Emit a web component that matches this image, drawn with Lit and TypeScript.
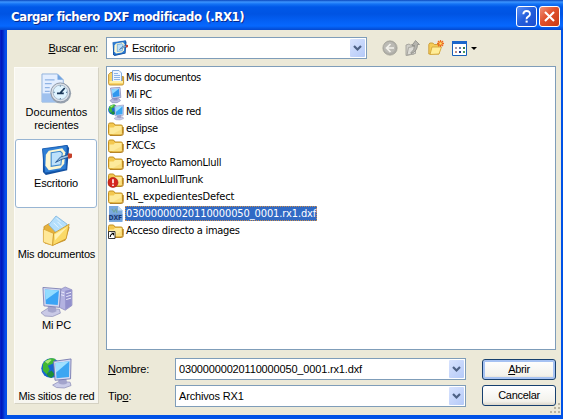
import { LitElement, html, css, svg, TemplateResult } from "lit";
import { customElement, property } from "lit/decorators.js";

const pcArt = svg`
  <path d="M19 4l6-3 7 3v16l-7 5-6-3z" fill="#b3b2e0" stroke="#8583b8" stroke-width=".7"/>
  <path d="M25 5l6.500-1.500v16.500L25 24.500z" fill="#9290cc"/>
  <path d="M20.500 6l3.500 1M20.500 9l3.500 1M26 8l5-1.500M26 11l5-1.500M26 14l5-1.500" stroke="#e9e9fb" stroke-width="1"/>
  <path d="M0 27.500l7-4.500 12 1 1 4-8 3.500-8-.5z" fill="#c9c9e6" stroke="#8788b3" stroke-width=".7"/>
  <path d="M7 21h8l1 5q-4 3-9 0z" fill="#a3a4cc"/>
  <path d="M2 1.500l18.500 1.500-1.500 19-16-1.500z" fill="#d3d7f0" stroke="#7a7db2" stroke-width=".9"/>
  <path d="M4 3.500l14.500 1.200-1.200 15-12.300-1.200z" fill="#3aa4f5"/>
  <path d="M4 3.500l14.500 1.200L4.800 14.500z" fill="#92dcff"/>`;

const netArt = svg`
  <circle cx="10.500" cy="11.500" r="10.200" fill="#1766cf"/>
  <path d="M2 7c3-5 9-7 13-5l-3 5-5 2 2 4-3 5-4-4z" fill="#40b735"/>
  <path d="M6 17l5-3 3 4-3 3.500c-3-.5-5-2-5-4.500z" fill="#1d8e38"/>
  <path d="M4 5c2-2 5-3 7-2L7 7z" fill="#a9ea74"/>
  <path d="M12 29l7-4 11 1 1 3.500-7 2.500-8-.5z" fill="#c9cbe8" stroke="#8486b2" stroke-width=".7"/>
  <path d="M18 22h8l1 5q-4 3-9 0z" fill="#a3a4cc"/>
  <path d="M13 4.500L31 2l-.5 20.500L14.500 24z" fill="#d6daf2" stroke="#7074ac" stroke-width=".9"/>
  <path d="M15 6.300L29.300 4.300l-.4 16.400L16 22z" fill="#3ca6f2"/>
  <path d="M15 6.300l14.300-2L15.600 16z" fill="#9fe0ff"/>`;

const deskArt = svg`
  <path d="M2 6L27 1l2 3-2 23-22 5-3-3z" fill="#124f9f"/>
  <path d="M1.500 5L27 1.500 26 26 4 30z" fill="#2f7fd6" stroke="#1558ad" stroke-width=".9"/>
  <path d="M8 7l14-2.500 3 4-1 12-4 4.500-12 2-3.500-4.500.5-11.500z" fill="#fdf7d2"/>
  <path d="M10.500 9l9.500-1.500 2 2-1.500 12-10 1.500z" fill="#bde1fb" stroke="#3b87cf" stroke-width="1.100"/>
  <path d="M15 19l5-5.500 8-2.500 1 2.500-8 2.500z" fill="#9cc4e6" stroke="#1c4f8c" stroke-width=".9"/>
  <path d="M28 9.500l4 .5v4l-3.500 1.500-1-3z" fill="#c5402a"/>`;

const folderArt = svg`
  <path d="M.5 3.500q0-1.500 1.500-1.500h3.500l1.500 2h6q1.500 0 1.500 1.500v7q0 1.500-1.500 1.500H2q-1.500 0-1.500-1.500z" fill="#f3c850" stroke="#c39022"/>
  <path d="M1.500 6.500h4l1.500-1.500h6.500v8h-12z" fill="#fdea9b"/>
  <path d="M4 13.500L14 8v4q0 1.500-1.500 1.500z" fill="#f7d877" opacity=".65"/>
  <path d="M2 14.500h11.500q1.800 0 1.800-2V6" fill="none" stroke="#b17d1c" stroke-width=".9"/>`;

const icons: Record<string, { box: string; art: TemplateResult | unknown }> = {
  recent: {
    box: "0 0 32 32",
    art: svg`
      <path d="M1 1h16l6 6v23H1z" fill="#e3eeff" stroke="#92b2dc"/>
      <path d="M1 21h22v9H1z" fill="#9fc1ee"/>
      <path d="M17 1v6h6z" fill="#72a4e0"/>
      <path d="M4 7h10M4 11h7M4 15h5M4 19h5" stroke="#8fb3e4" stroke-width="1.300"/>
      <circle cx="20.500" cy="20.800" r="10.600" fill="#98a2ae"/>
      <circle cx="20" cy="20" r="9.800" fill="#dbe0e7" stroke="#8f9aa9"/>
      <circle cx="20" cy="20" r="7.500" fill="#dff3ff" stroke="#a9bccd"/>
      <path d="M24.500 15.500L20 20.500M16.500 21h7" stroke="#1b3758" stroke-width="1.700"/>
      <path d="M20 13v1M20 26v1M13 20h1M26 20h1" stroke="#48698a" stroke-width="1.200"/>`,
  },
  desktop: { box: "0 0 32 32", art: deskArt },
  documents: {
    box: "0 0 32 32",
    art: svg`
      <path d="M3 12l5-3 4 2 14-1 3 3-4 13-13 5L4 29z" fill="#e6b23c" stroke="#bf8b25" stroke-width=".8"/>
      <path d="M15.500 1L27 9.500 19 22 8 10z" fill="#b3defb" stroke="#79b0dc" stroke-width=".8"/>
      <path d="M16 3l4 4M17 7l5 5M13 8l5 5" stroke="#e5f5ff" stroke-width="1"/>
      <path d="M2.500 14.500L13 19l-1 12.500-9.500-3.500z" fill="#ffe898" stroke="#d8a535" stroke-width=".8"/>
      <path d="M13 19l16-9.500-3 15L12 31.500z" fill="#fbda68" stroke="#c89324" stroke-width=".8"/>
      <path d="M14 20l13-7.500L14.500 26z" fill="#fff2b2"/>`,
  },
  pc: { box: "0 0 32 32", art: pcArt },
  network: { box: "0 0 32 32", art: netArt },
  monitor: {
    box: "0 0 16 16",
    art: svg`
      <path d="M2 13.500l3-1.800h6l1.500 2-3.500 2H4z" fill="#b9bce0" stroke="#8084b5" stroke-width=".6"/>
      <path d="M5.500 10.500h4v3h-4z" fill="#9093c5"/>
      <path d="M2.500 1l9.500-.6.800 10.100-8.800 1z" fill="#cdd4f0" stroke="#7a80b6" stroke-width=".7"/>
      <path d="M3.700 2.200l7.200-.5.700 7.600-6.700.9z" fill="#3097ee"/>
      <path d="M3.700 2.200l7.200-.5-6.600 5.300z" fill="#90d8ff"/>`,
  },
  docs: {
    box: "0 0 16 16",
    art: svg`
      <path d="M.6 4.500l2-2h2v8h10V6l1 1v6.500q0 1.500-1.500 1.500H2q-1.400 0-1.400-1.500z" fill="#f8d469" stroke="#bf8d27" stroke-width=".9"/>
      <path d="M4.500.5h6.500l2.500 2.500v8.500h-9z" fill="#eef6ff" stroke="#7ba4d9" stroke-width=".9"/>
      <path d="M6 3.500h4M6 5.500h6M6 7.500h6M6 9.500h6" stroke="#8eb5e6"/>
      <path d="M1.500 12h13.500" stroke="#ffefa5" stroke-width="2"/>`,
  },
  folder: { box: "0 0 16 16", art: folderArt },
  alert: {
    box: "0 0 16 16",
    art: svg`${folderArt}<circle cx="5" cy="10.500" r="5" fill="#d5261e" stroke="#9d1512" stroke-width=".6"/><path d="M5 7.300v4M5 12.500v1.500" stroke="#fff" stroke-width="1.600"/>`,
  },
  shortcut: {
    box: "0 0 16 16",
    art: svg`${folderArt}<path d="M.5 8.500h6.500v7H.5z" fill="#fff" stroke="#222" stroke-width=".9"/><path d="M2.200 14q0-2.500 2-3" fill="none" stroke="#000" stroke-width="1.100"/><path d="M3 9.700h3v3z"/>`,
  },
  dxf: {
    box: "0 0 16 16",
    art: svg`
      <path d="M1 0h9l4.500 4.500V16H1z" fill="#7aa9de"/>
      <path d="M10 0v4.500h4.500z" fill="#c3dcf6"/>
      <path d="M4 3l2 3 2-3 1 4" stroke="#6fa79c" fill="none" stroke-width="1.100"/>
      <path d="M1 8h13.500v6.500H1z" fill="#6c9bd6"/>
      <text x=".5" y="14" font-family="DejaVu Sans Condensed, sans-serif" font-size="6.800" font-weight="bold" fill="#1b3a73" textLength="13.500">DXF</text>`,
  },
  back: {
    box: "0 0 16 16",
    art: svg`
      <circle cx="8" cy="8" r="7.200" fill="#aeada7" stroke="#99988f" stroke-width=".6"/>
      <circle cx="7.500" cy="7.500" r="5.800" fill="#bbbab4"/>
      <path d="M8.500 4L4.500 8l4 4M5 8h7" fill="none" stroke="#f3f2ec" stroke-width="1.700"/>`,
  },
  up: {
    box: "0 0 16 16",
    art: svg`
      <path d="M1 5l3-1 1.500 1L9 4v10l-8 1.500z" fill="#cfcec8" stroke="#a1a09a" stroke-width=".9"/>
      <path d="M3.500 7.500l7-1.500v7.500L2 15z" fill="#dddcd7" stroke="#a1a09a" stroke-width=".9"/>
      <path d="M6 12.500q3.500-2 3.500-7H7L10.500.5 14.500 4.500h-2q0 7-6.500 9z" fill="#b5b4ae" stroke="#83827c" stroke-width=".7"/>`,
  },
  create: {
    box: "0 0 16 16",
    art: svg`
      <path d="M.8 4.500l1-1.500h3l1.500 1.500H11v9.500H.8z" fill="#f5cc57" stroke="#c99b34" stroke-width=".9"/>
      <path d="M2 14.500l2-7.500h9.500L11 14z" fill="#ffed98" stroke="#d4a73c" stroke-width=".9"/>
      <path d="M12.500 0v7M9 3.500h7M10 1l5 5M15 1l-5 5" stroke="#ee6c1c" stroke-width="1.300"/>
      <circle cx="12.500" cy="3.500" r="1.200" fill="#ffdf68"/>`,
  },
  views: {
    box: "0 0 16 15",
    art: svg`
      <path d="M.5.5h14v14H.5z" fill="#fff" stroke="#1760ba"/>
      <path d="M0 0h15v3H0z" fill="#1a66cb"/>
      <path d="M3 6h2v2H3z" fill="#a99aa8"/><path d="M7 6h2v2H7z" fill="#637dae"/><path d="M3 10h2v2H3z" fill="#c08c84"/>
      <path d="M11 6h2v2h-2z" fill="#357b49"/><path d="M7 10h2v2H7z" fill="#18358e"/><path d="M11 10h2v2h-2z" fill="#4b9b61"/>`,
  },
  help: {
    box: "0 0 21 21",
    art: svg`<path d="M7 8q0-3.500 3.700-3.500T14.300 8q0 1.500-2 2.700T10.600 13.500" fill="none" stroke="#fff" stroke-width="2.100"/><path d="M9.500 15h2.300v2.200H9.500z" fill="#fff"/>`,
  },
  close: {
    box: "0 0 21 21",
    art: svg`<path d="M5.500 5.500l10 10M15.500 5.500l-10 10" stroke="#fff" stroke-width="2.300"/>`,
  },
  chevron: {
    box: "0 0 9 6",
    art: svg`<path d="M1 1l3.500 3.500L8 1" fill="none" stroke="#4d6185" stroke-width="2.200"/>`,
  },
};

@customElement("xp-icon")
class XpIcon extends LitElement {
  @property() name = "folder";
  static styles = css`
    :host { display: block; flex: none; width: 16px; height: 16px; }
    svg { display: block; width: 100%; height: 100%; overflow: visible; }
  `;
  render() {
    const icon = icons[this.name];
    return html`<svg viewBox=${icon.box}>${icon.art}</svg>`;
  }
}

@customElement("xp-combo")
class XpCombo extends LitElement {
  static styles = css`
    :host { display: flex; box-sizing: border-box; height: 22px; border: 1px solid #7f9db9; background: #fff; padding: 1px; align-items: center; }
    .value { flex: 1; display: flex; align-items: center; gap: 4px; white-space: nowrap; }
    .drop { width: 15px; height: 18px; border-radius: 1px; background: linear-gradient(135deg, #d8e3fe, #b5caf8); display: flex; align-items: center; justify-content: center; }
    .mark { width: 9px; height: 6px; }
  `;
  render() {
    return html`<div class="value"><slot></slot></div><div class="drop"><xp-icon class="mark" name="chevron"></xp-icon></div>`;
  }
}

const places = [
  { icon: "recent", lines: ["Documentos", "recientes"] },
  { icon: "desktop", lines: ["Escritorio"], active: true },
  { icon: "documents", lines: ["Mis documentos"] },
  { icon: "pc", lines: ["Mi PC"] },
  { icon: "network", lines: ["Mis sitios de red"] },
];

const files = [
  { icon: "docs", name: "Mis documentos", fit: "tight" },
  { icon: "monitor", name: "Mi PC", fit: "normal" },
  { icon: "network", name: "Mis sitios de red", fit: "normal" },
  { icon: "folder", name: "eclipse", fit: "tight" },
  { icon: "folder", name: "FXCCs", fit: "normal" },
  { icon: "folder", name: "Proyecto RamonLlull", fit: "normal" },
  { icon: "alert", name: "RamonLlullTrunk", fit: "normal" },
  { icon: "folder", name: "RL_expedientesDefect", fit: "loose" },
  { icon: "dxf", name: "03000000020110000050_0001.rx1.dxf", fit: "loose", selected: true },
  { icon: "shortcut", name: "Acceso directo a images", fit: "normal" },
];

@customElement("app-root")
class AppRoot extends LitElement {
  static styles = css`
    * { box-sizing: border-box; }
    :host { display: flex; flex-direction: column; width: 563px; height: 419px; overflow: hidden; color: #000;
      font: 11px/13px "Liberation Sans", Arial, sans-serif; letter-spacing: -.16px;
      background: linear-gradient(90deg, #0831d9 0, #0013b8 1px, #0028c8 3px, #0a4bea 5px, #0052e6 7px); }
    .title { height: 30px; flex: none; display: flex; align-items: center; padding: 3px 3px 0 11px; gap: 2px;
      background: linear-gradient(180deg, #0a47bd 0, #3d95ff 2px, #1473f5 4px, #0058e8 7px, #0054e3 14px, #0460f5 21px, #0668ff 26px, #0558e6 28px, #0448cf 30px); }
    .caption { flex: 1; color: #fff; font: bold 13px/16px "DejaVu Sans Condensed", sans-serif; letter-spacing: -.4px; text-shadow: 1px 1px #0a2a8c; white-space: nowrap; }
    .tbtn { width: 21px; height: 21px; border: 1px solid #fff; border-radius: 3px; background: linear-gradient(135deg, #5c8ff4, #225ddb 50%, #1d4ed0); }
    .tbtn.close { background: linear-gradient(135deg, #f0917a, #e0502b 45%, #c83a14); }
    .tbtn xp-icon { width: 19px; height: 19px; }
    .body { height: 385px; flex: none; margin: 0 2px 0 7px; padding: 7px 5px 0 7px; background: #ece9d8; display: flex; flex-direction: column; gap: 7px; }
    .top { display: flex; align-items: center; height: 22px; }
    .look { width: 92px; padding-right: 8px; text-align: right; letter-spacing: -.3px; }
    .where { width: 261px; padding-left: 5px; letter-spacing: -.3px; }
    .tools { display: flex; align-items: center; gap: 7px; margin-left: 15px; }
    .views { display: flex; align-items: center; gap: 3px; margin-left: 1px; }
    .views xp-icon { height: 15px; }
    .arrow { border: 3px solid transparent; border-top-color: #000; border-bottom: 0; }
    .main { display: flex; gap: 7px; height: 341px; }
    .places { width: 85px; height: 337px; margin-top: 1px; background: #f7f6f0; border: 1px solid #fdfcf8; border-right-color: #d5d2c3; border-bottom-color: #d5d2c3; display: flex; flex-direction: column; }
    .place { height: 71px; flex: none; padding-top: 5px; display: flex; flex-direction: column; align-items: center; gap: 2px; text-align: center; white-space: nowrap; letter-spacing: -.2px; }
    .place:first-child { letter-spacing: 0; }
    .place.active { height: 69px; margin: 0 1px 2px 0; padding-top: 4px; background: #fff; border: 1px solid #98b5d3; border-radius: 3px; }
    .place xp-icon { width: 31px; height: 31px; }
    .right { width: 450px; display: flex; flex-direction: column; }
    .list { height: 284px; flex: none; border: 1px solid #7f9db9; background: #fff; padding: 2px 1px; }
    .file { height: 17px; display: flex; align-items: center; gap: 1px; font: 11px/15px "DejaVu Sans Condensed", sans-serif; }
    .name { padding: 0 1px; white-space: nowrap; }
    .normal { letter-spacing: -.3px; }
    .tight { letter-spacing: -.42px; }
    .loose { letter-spacing: -.11px; }
    .selected .name { background: #316ac5; color: #fff; outline: 1px dotted #c98e4e; outline-offset: -1px; }
    .form { display: grid; grid-template-columns: 69px 291px 90px; row-gap: 5px; margin-top: 8px; align-items: center; }
    .form xp-combo { padding-left: 3px; }
    .form .label { padding-left: 2px; }
    .btn { height: 21px; margin-left: 16px; width: 74px; border: 1px solid #17406f; border-radius: 3px; background: linear-gradient(#fff, #f3f2ec 80%, #dcd7cb); display: flex; align-items: center; justify-content: center; align-self: start; letter-spacing: -.3px; }
    .btn.default { align-self: end; box-shadow: inset 0 0 0 2px #a6c2f2; }
    .grip { position: absolute; left: 550px; top: 403px; width: 11px; height: 11px; }
    .grip svg { display: block; }
  `;

  render() {
    return html`
      <div class="title">
        <div class="caption">Cargar fichero DXF modificado (.RX1)</div>
        <div class="tbtn"><xp-icon name="help"></xp-icon></div>
        <div class="tbtn close"><xp-icon name="close"></xp-icon></div>
      </div>
      <div class="body">
        <div class="top">
          <div class="look"><u>B</u>uscar en:</div>
          <xp-combo class="where"><xp-icon name="desktop"></xp-icon><span>Escritorio</span></xp-combo>
          <div class="tools">
            <xp-icon name="back"></xp-icon>
            <xp-icon name="up"></xp-icon>
            <xp-icon name="create"></xp-icon>
            <div class="views"><xp-icon name="views"></xp-icon><div class="arrow"></div></div>
          </div>
        </div>
        <div class="main">
          <div class="places">
            ${places.map((p) => html`<div class="place ${p.active ? "active" : ""}">
              <xp-icon name=${p.icon}></xp-icon>
              <div>${p.lines.map((l) => html`<div>${l}</div>`)}</div>
            </div>`)}
          </div>
          <div class="right">
            <div class="list">
              ${files.map((f) => html`<div class="file ${f.selected ? "selected" : ""}">
                <xp-icon name=${f.icon}></xp-icon><span class="name ${f.fit}">${f.name}</span>
              </div>`)}
            </div>
            <div class="form">
              <div class="label"><u>N</u>ombre:</div>
              <xp-combo><span>03000000020110000050_0001.rx1.dxf</span></xp-combo>
              <div class="btn default"><span><u>A</u>brir</span></div>
              <div class="label">Tip<u>o</u>:</div>
              <xp-combo><span>Archivos RX1</span></xp-combo>
              <div class="btn"><span>Cancelar</span></div>
            </div>
          </div>
        </div>
      </div>
      <div class="grip"><svg width="11" height="11"><path d="M8 0h2v2H8zM4 4h2v2H4zM8 4h2v2H8zM0 8h2v2H0zM4 8h2v2H4zM8 8h2v2H8z" fill="#b8b4a2"/></svg></div>
    `;
  }
}
